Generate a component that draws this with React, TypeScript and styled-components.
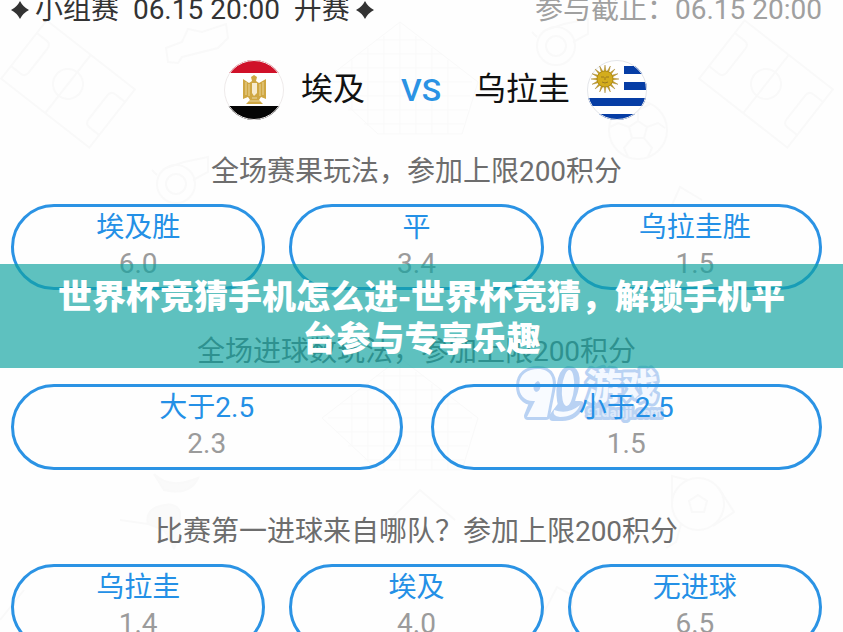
import React from "react";
import styled, { createGlobalStyle } from "styled-components";

const Global = createGlobalStyle`
  * { box-sizing: border-box; }
  body {
    margin: 0;
    background: #fefefe;
    font-family: Roboto, "Noto Sans CJK SC", sans-serif;
    font-size: 28px;
  }
`;

const Page = styled.main`
  position: relative;
  height: 100vh;
  overflow: hidden;
  padding: 0 21px 0 11px;
`;

const Backdrop = styled.svg`
  position: absolute;
  left: 0;
  top: 0;
  width: 100%;
  height: 100%;
  fill: none;
  stroke: #f9f9f9;
  stroke-width: 2;
`;

const Content = styled.div`
  position: relative;
`;

const Header = styled.header`
  display: flex;
  justify-content: space-between;
  align-items: center;
  height: 20px;
  line-height: 20px;
  white-space: nowrap;
`;

const Stage = styled.div`
  display: flex;
  align-items: center;
  gap: 6px;
  color: #333;
`;

const StageText = styled.span`
  white-space: pre;
`;

const Star = styled.svg`
  width: 18px;
  height: 20px;
  fill: #333;
`;

const Deadline = styled.div`
  color: #a0a0a0;
`;

const Match = styled.section`
  display: flex;
  justify-content: center;
  align-items: center;
  height: 60px;
  margin: 40px 0 35px;
  padding-left: 38px;
`;

const Team = styled.div`
  display: flex;
  align-items: center;
  gap: 17px;
  font-size: 32px;
  color: #111;
`;

const TeamName = styled.span`
  line-height: 40px;
  padding-bottom: 3px;
`;

const Versus = styled.span`
  margin: 0 33px 0 36px;
  font-size: 32px;
  font-weight: 500;
  color: #2b93e4;
`;

const Flag = styled.svg`
  width: 60px;
  height: 60px;
`;

const Heading = styled.h2`
  margin: 0;
  height: 34px;
  line-height: 34px;
  font-size: 28px;
  font-weight: 400;
  text-align: center;
  color: #6d6d6d;
`;

const Options = styled.div<{ $columns: number }>`
  display: grid;
  grid-template-columns: repeat(${(p) => p.$columns}, 1fr);
  gap: ${(p) => (p.$columns === 2 ? 28 : 24)}px;
  margin: 15px 0 45px;
`;

const Option = styled.button`
  display: flex;
  flex-direction: column;
  align-items: center;
  height: 86px;
  padding: 3px 0 0;
  border: 3px solid #2b93e4;
  border-radius: 43px;
  background: transparent;
  font: inherit;
  line-height: 36px;
  cursor: pointer;
`;

const OptionName = styled.span`
  color: #2490e6;
`;

const Odds = styled.span`
  color: #9b9b9b;
`;

const Banner = styled.div`
  position: absolute;
  left: 0;
  right: 0;
  top: 264px;
  padding: 10px 56px;
  background: rgba(15, 163, 159, 0.67);
`;

const Title = styled.h1`
  margin: 0;
  font-family: "Noto Sans CJK SC", sans-serif;
  font-size: 34px;
  line-height: 42px;
  font-weight: 900;
  text-align: center;
  word-break: break-all;
  color: #fff;
`;

const Watermark = styled.svg`
  position: absolute;
  left: 512px;
  top: 364px;
  width: 152px;
  height: 60px;
  font-family: "Noto Sans CJK SC", sans-serif;
  font-weight: 900;
`;

type Choice = [name: string, odds: string];

const markets: { heading: string; choices: Choice[] }[] = [
  {
    heading: "全场赛果玩法，参加上限200积分",
    choices: [["埃及胜", "6.0"], ["平", "3.4"], ["乌拉圭胜", "1.5"]],
  },
  {
    heading: "全场进球数玩法，参加上限200积分",
    choices: [["大于2.5", "2.3"], ["小于2.5", "1.5"]],
  },
  {
    heading: "比赛第一进球来自哪队？参加上限200积分",
    choices: [["乌拉圭", "1.4"], ["埃及", "4.0"], ["无进球", "6.5"]],
  },
];

const FourPointStar = () => (
  <Star viewBox="0 0 18 20" aria-hidden="true">
    <path d="M9 1Q12 7 18 10Q12 13 9 19Q6 13 0 10Q6 7 9 1Z" />
  </Star>
);

const EgyptFlag = () => (
  <Flag viewBox="0 0 60 60" role="img" aria-label="埃及">
    <clipPath id="egypt"><circle cx="30" cy="30" r="30" /></clipPath>
    <g clipPath="url(#egypt)">
      <path fill="#fff" d="M0 0H60V60H0Z" />
      <path fill="#d01129" d="M0 0H60V13H0Z" />
      <path fill="#050505" d="M0 46H60V60H0Z" />
    </g>
    <circle cx="30" cy="30" r="29.5" fill="none" stroke="#eeeaea" />
    <path fill="#cfa743" d="M19 19L25 23L28 21L27 17L30 15L33 17L32 21L35 23L42 19V39L37 37L35 40L39 44H22L26 40L24 37L19 39Z" />
    <path stroke="#ecd69a" fill="none" d="M22 22V35M25 24V36M36 24V36M39 22V35" />
    <path fill="#f7ebcf" d="M28 23H33V33L30 36L28 33Z" />
    <path stroke="#e8d6a6" fill="none" d="M25 41H36M28 38H33" />
  </Flag>
);

const rays = Array.from({ length: 16 }, (_, i) => i * 22.5);

const UruguayFlag = () => (
  <Flag viewBox="0 0 60 60" role="img" aria-label="乌拉圭">
    <clipPath id="uruguay"><circle cx="30" cy="30" r="30" /></clipPath>
    <g clipPath="url(#uruguay)">
      <path fill="#fff" d="M0 0H60V60H0Z" />
      <path fill="#063da5" d="M37 6H60V14H37ZM37 22H60V30H37ZM0 38H60V46H0ZM0 54H60V60H0Z" />
    </g>
    <circle cx="30" cy="30" r="29.5" fill="none" stroke="#e4e6ea" />
    {rays.map((angle) => (
      <path key={angle} fill="#c9a227" stroke="#9c7a1e" strokeWidth=".4" d="M16 18L18 5L20 18Z" transform={`rotate(${angle} 18 19)`} />
    ))}
    <circle cx="18" cy="19" r="8" fill="#d3ac1c" stroke="#b08c18" />
    <path fill="none" stroke="#9c7a1e" d="M14 17H17M19 17H22M15 22Q18 24 21 22M18 17V20" />
  </Flag>
);

const Pitch = ({ x, y }: { x: number; y: number }) => (
  <g transform={`translate(${x} ${y}) rotate(38)`}>
    <rect x="-56" y="-37" width="112" height="74" />
    <path d="M0 -37V37M-56 -21H-44Q-38 -21 -38 -15V15Q-38 21 -44 21H-56M56 -21H44Q38 -21 38 -15V15Q38 21 44 21H56" />
    <circle r="15" />
  </g>
);

const Net = ({ x, y }: { x: number; y: number }) => (
  <g transform={`translate(${x} ${y})`} strokeWidth="1">
    <path d="M0 -60L78 0L62 52H-22L-78 0ZM-60 -14H60M-42 -28H42M-24 -42H24M-72 0H72M-64 14H70M-52 28H68M-36 42H64M-48 -22V28M-32 -34V44M-16 -46V52M0 -60V52M16 -46V52M32 -34V52M48 -22V52" />
  </g>
);

const Ball = ({ x, y }: { x: number; y: number }) => (
  <g transform={`translate(${x} ${y})`}>
    <circle r="29" />
    <path d="M0 -9L9 -3L6 8H-6L-9 -3ZM0 -9V-20L-10 -27M0 -20L12 -26M9 -3L20 -7L27 -2M6 8L14 18L10 27M-6 8L-14 18L-10 27M-9 -3L-20 -7L-28 -3" />
  </g>
);

const Whistle = ({ x, y }: { x: number; y: number }) => (
  <g transform={`translate(${x} ${y})`}>
    <circle r="19" />
    <circle r="10" />
    <path d="M-10 -16L8 -22L32 -27V-12L17 -4M-19 -9L-24 -14" />
  </g>
);

const Doodles = () => (
  <Backdrop viewBox="0 0 843 632" preserveAspectRatio="xMinYMin slice" aria-hidden="true">
    <Pitch x={68} y={84} />
    <Pitch x={766} y={84} />
    <Net x={400} y={82} />
    <Net x={400} y={418} />
    <Whistle x={556} y={46} />
    <Whistle x={176} y={184} />
    <Ball x={638} y={130} />
    <path d="M168 62L166 48L182 42L188 29L202 32L226 24L228 38L218 48L182 57L178 63Z" />
    <path fill="#fafafa" d="M148 524Q145 510 160 506Q176 501 180 512V535L174 548L164 530ZM154 474Q170 490 198 478Q190 496 164 490Z" />
    <path d="M120 520L148 524" />
    <g transform="translate(698 504)">
      <circle r="26" />
      <path d="M0 -9L9 -3L6 8H-6L-9 -3ZM-26 0V-28L-10 -24M20 -17L36 8L15 22M-17 20L-22 38L-32 44" />
    </g>
    <path d="M540 620L557 587L572 595V632M672 205L680 187L702 200M0 620L24 590M390 520L420 490L455 520" />
  </Backdrop>
);

const SiteMark = () => (
  <Watermark viewBox="0 0 152 60" aria-hidden="true">
    <g fill="#b9d2f3" stroke="#b9d2f3" strokeWidth="8" strokeLinejoin="round">
      <path d="M8 22C8 11 16 6 26 6C38 6 42 15 39 27L34 52H16L22 37C13 38 8 31 8 22Z" />
      <path d="M56 6C66 5 65 20 60 33L58 41H68Q63 53 50 53H41L50 41C47 29 48 10 56 6Z" />
    </g>
    <path fill="#f8fbff" fillRule="evenodd" d="M7 22C7 10 16 5 26 5C39 5 43 15 40 27L35 53H15L23 37C13 38 7 31 7 22ZM26 17C21 19 20 26 24 28C29 28 30 19 26 17Z" />
    <ellipse cx="56" cy="24" rx="6" ry="18" fill="#f8fbff" transform="rotate(5 56 24)" />
    <path fill="#f8fbff" d="M42 46Q56 51 68 41Q63 53 48 53Q40 52 42 46Z" />
    <text x="74" y="36" fontSize="36" fill="#f3f8ff" stroke="#b9d2f3" strokeWidth="6" strokeLinejoin="round" paintOrder="stroke">游戏</text>
    <text x="75" y="53" fontSize="12" fill="#dbe8fa" stroke="#b9d2f3" strokeWidth="6" strokeLinejoin="round" paintOrder="stroke">91danji.com</text>
  </Watermark>
);

export default function App() {
  return (
    <Page>
      <Global />
      <Doodles />
      <SiteMark />
      <Content>
        <Header>
          <Stage>
            <FourPointStar />
            <StageText>{"小组赛  06.15 20:00  开赛"}</StageText>
            <FourPointStar />
          </Stage>
          <Deadline>参与截止：06.15 20:00</Deadline>
        </Header>
        <Match>
          <Team><EgyptFlag /><TeamName>埃及</TeamName></Team>
          <Versus>VS</Versus>
          <Team><TeamName>乌拉圭</TeamName><UruguayFlag /></Team>
        </Match>
        {markets.map((market) => (
          <section key={market.heading}>
            <Heading>{market.heading}</Heading>
            <Options $columns={market.choices.length}>
              {market.choices.map(([name, odds]) => (
                <Option key={name} type="button">
                  <OptionName>{name}</OptionName>
                  <Odds>{odds}</Odds>
                </Option>
              ))}
            </Options>
          </section>
        ))}
      </Content>
      <Banner>
        <Title>世界杯竞猜手机怎么进-世界杯竞猜，解锁手机平台参与专享乐趣</Title>
      </Banner>
    </Page>
  );
}
